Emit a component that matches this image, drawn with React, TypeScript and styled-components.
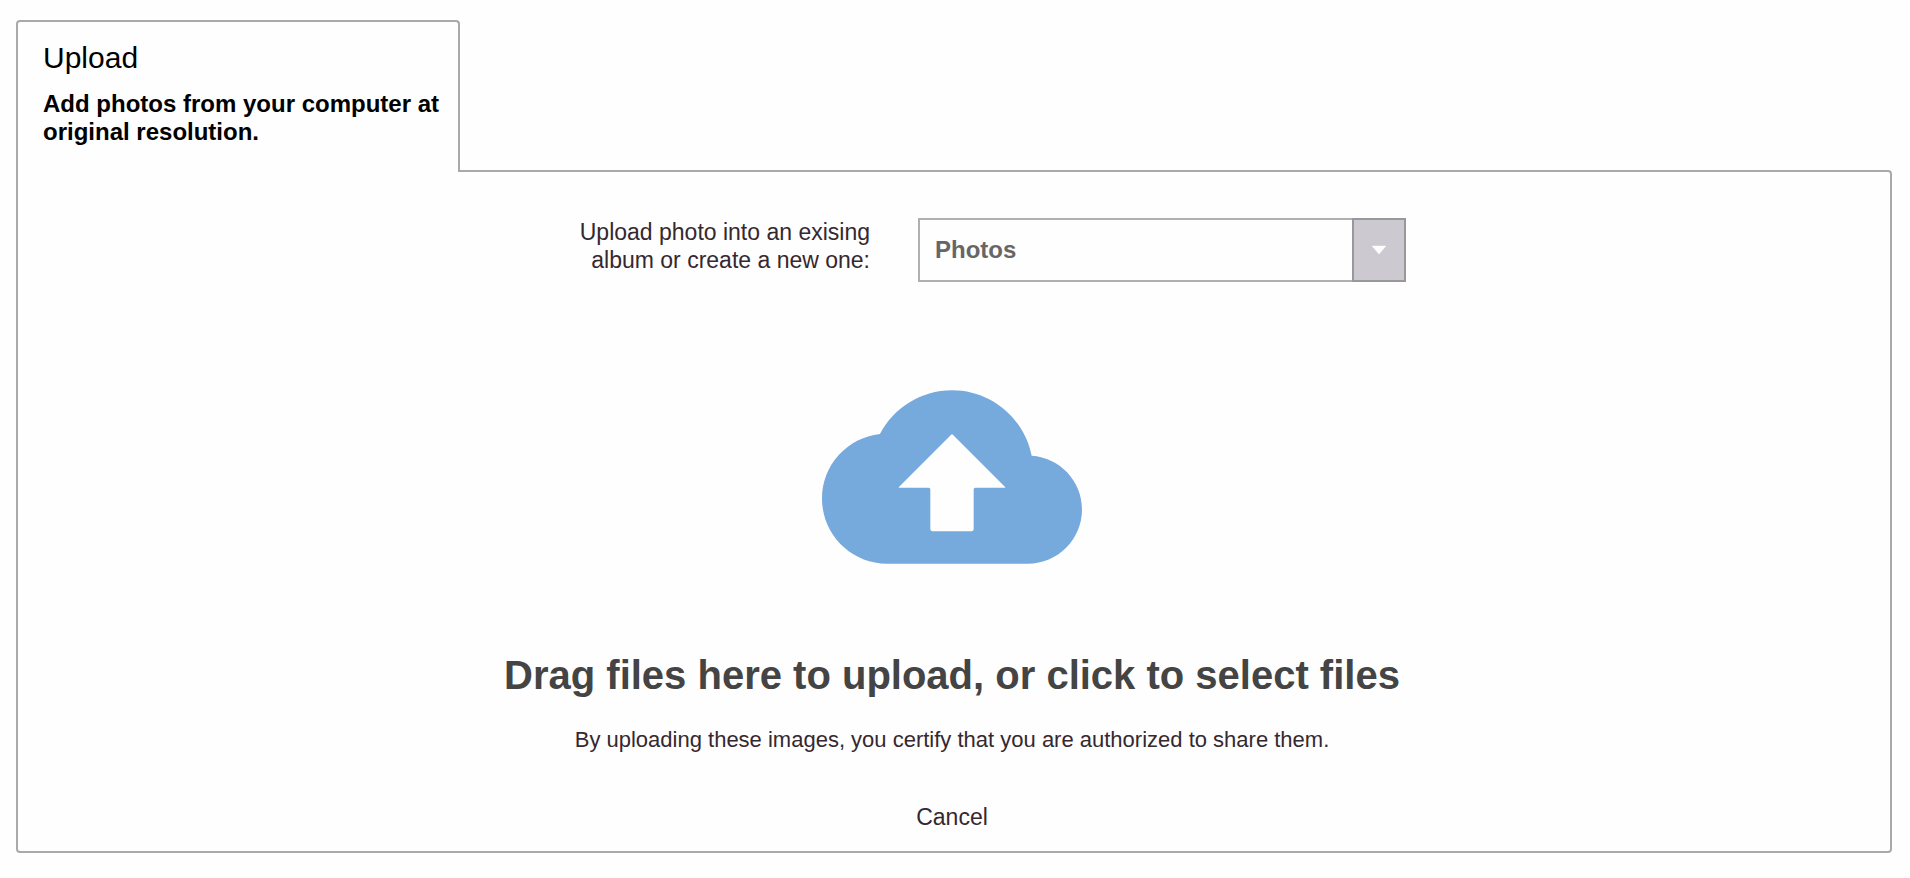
import React, { useRef } from "react";
import styled, { createGlobalStyle } from "styled-components";

const GlobalStyle = createGlobalStyle`
  *, *::before, *::after { box-sizing: border-box; }
  body {
    margin: 0;
    background: #fefefe;
    color: #35282f;
    font-family: "Liberation Sans", Arial, Helvetica, sans-serif;
    font-size: 23px;
    line-height: 28px;
  }
`;

const Page = styled.main`
  padding: 20px 18px 26px 16px;
`;

const Tab = styled.header`
  position: relative;
  width: 444px;
  max-width: 100%;
  margin-bottom: -2px;
  padding: 18px 16px 26px 25px;
  background: #fefefe;
  border: 2px solid #a9a9a9;
  border-bottom: 0;
  border-radius: 4px 4px 0 0;
  color: #000;
`;

const TabTitle = styled.h1`
  margin: 0 0 14px;
  font-size: 30px;
  line-height: 36px;
  font-weight: 400;
`;

const TabText = styled.p`
  margin: 0;
  font-size: 24px;
  font-weight: 700;
`;

const Panel = styled.section`
  display: flex;
  flex-direction: column;
  align-items: center;
  padding: 46px 4px 20px 0;
  border: 2px solid #a9a9a9;
  border-radius: 0 4px 4px 4px;
`;

const AlbumRow = styled.div`
  display: flex;
  align-items: flex-start;
  gap: 48px;
`;

const AlbumLabel = styled.label`
  width: 372px;
  text-align: right;
`;

const SelectBox = styled.div`
  position: relative;
  width: 488px;
`;

const AlbumSelect = styled.select`
  display: block;
  appearance: none;
  width: 100%;
  height: 64px;
  padding: 0 70px 0 15px;
  background: #fefefe;
  border: 2px solid #b0b0b0;
  border-radius: 0;
  color: #666;
  font: inherit;
  font-size: 24px;
  font-weight: 700;
`;

const SelectArrow = styled.span`
  position: absolute;
  top: 0;
  right: 0;
  bottom: 0;
  width: 54px;
  display: flex;
  align-items: center;
  justify-content: center;
  background: #cccad0;
  border: 2px solid #98979a;
  pointer-events: none;
`;

const DropZone = styled.button`
  display: flex;
  flex-direction: column;
  align-items: center;
  gap: 45px;
  margin-top: 65px;
  padding: 0;
  background: none;
  border: 0;
  color: #444;
  font: inherit;
  font-size: 40px;
  line-height: 46px;
  font-weight: 700;
  cursor: pointer;
`;

const Notice = styled.p`
  margin: 28px 0 49px;
  font-size: 22px;
`;

const CancelLink = styled.a`
  color: inherit;
  text-decoration: none;
`;

export default function App() {
  const fileInput = useRef<HTMLInputElement>(null);

  return (
    <>
      <GlobalStyle />
      <Page>
        <Tab>
          <TabTitle>Upload</TabTitle>
          <TabText>Add photos from your computer at original resolution.</TabText>
        </Tab>
        <Panel>
          <AlbumRow>
            <AlbumLabel htmlFor="album">
              Upload photo into an exising
              <br />
              album or create a new one:
            </AlbumLabel>
            <SelectBox>
              <AlbumSelect id="album" defaultValue="photos">
                <option value="photos">Photos</option>
              </AlbumSelect>
              <SelectArrow aria-hidden="true">
                <svg width="16" height="10" viewBox="0 0 16 10">
                  <path d="M1 1h14L8 9z" fill="#fefefe" stroke="#fefefe" strokeOpacity="0.4" />
                </svg>
              </SelectArrow>
            </SelectBox>
          </AlbumRow>
          <DropZone type="button" onClick={() => fileInput.current?.click()}>
            <svg width="260" height="260" viewBox="0 0 24 24" fill="#76a9dc" aria-hidden="true">
              <path
                fillRule="evenodd"
                d="M19.35 10.04C18.67 6.59 15.64 4 12 4 9.11 4 6.6 5.64 5.35 8.04 2.34 8.36 0 10.91 0 14c0 3.31 2.69 6 6 6h13c2.76 0 5-2.24 5-5 0-2.64-2.05-4.78-4.65-4.96zM14.15 13q-.15 0-.15.15v3.65q0 .2-.2.2h-3.6q-.2 0-.2-.2v-3.65q0-.15-.15-.15H7.15q-.1 0-.05-.08L11.92 8.1q.08-.08.16 0L16.9 12.92q.05.08-.05.08z"
              />
            </svg>
            Drag files here to upload, or click to select files
          </DropZone>
          <input ref={fileInput} type="file" accept="image/*" multiple hidden aria-label="Photos to upload" />
          <Notice>By uploading these images, you certify that you are authorized to share them.</Notice>
          <CancelLink href="#">Cancel</CancelLink>
        </Panel>
      </Page>
    </>
  );
}
